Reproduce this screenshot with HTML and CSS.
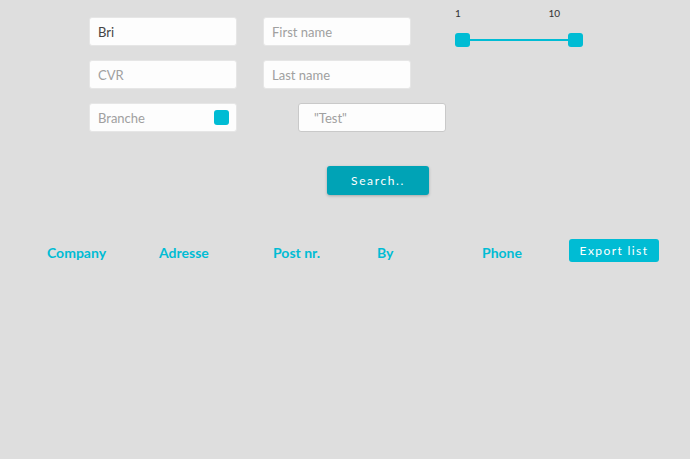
FILE: index.html
```html
<!DOCTYPE html>
<html>
<head>
<meta charset="utf-8">
<link rel="stylesheet" href="styles.css">
</head>
<body>
<div class="page">
  <div class="form-row">
    <div class="fields">
      <div class="input"><span class="value">Bri</span></div>
      <div class="input"><span class="ph">First name</span></div>
      <div class="input"><span class="ph">CVR</span></div>
      <div class="input"><span class="ph">Last name</span></div>
      <div class="input check-input"><span class="ph">Branche</span><span class="box"></span></div>
      <div class="input test-input"><span class="ph">"Test"</span></div>
    </div>
    <div class="slider">
      <div class="labels"><span>1</span><span>10</span></div>
      <div class="track">
        <span class="handle"></span>
        <span class="line"></span>
        <span class="handle"></span>
      </div>
    </div>
  </div>
  <div class="search-row">
    <button class="search">Search..</button>
  </div>
  <div class="header-row">
    <span class="col c1">Company</span>
    <span class="col c2">Adresse</span>
    <span class="col c3">Post nr.</span>
    <span class="col c4">By</span>
    <span class="col c5">Phone</span>
    <button class="export">Export list</button>
  </div>
</div>
</body>
</html>
```

FILE: styles.css
```css
* { box-sizing: border-box; }
html, body {
  margin: 0;
  padding: 0;
  background: #dedede;
  width: 690px;
  height: 459px;
  overflow: hidden;
  font-family: "Lato", "Noto Sans", sans-serif;
}
.page {
  display: flex;
  flex-direction: column;
}
.form-row {
  display: flex;
  align-items: flex-start;
  padding-left: 89px;
}
.fields {
  margin-top: 17px;
  display: grid;
  grid-template-columns: 148px 148px;
  column-gap: 26px;
  row-gap: 14px;
}
.input {
  height: 29px;
  background: #fdfdfd;
  border: 1px solid #e6e6e6;
  border-radius: 3px;
  display: flex;
  align-items: center;
  padding: 0 8px;
  font-size: 13px;
}
.value { color: #444; }
.ph { color: #a0a0a0; }
.check-input { justify-content: space-between; padding-right: 7px; }
.box {
  width: 15px;
  height: 15px;
  background: #00bcd4;
  border-radius: 3px;
}
.test-input {
  margin-left: 35px;
  width: 148px;
  border-color: #c9c9c9;
  padding-left: 15px;
}
.slider {
  margin-left: 44px;
  margin-top: 7px;
  width: 128px;
  display: flex;
  flex-direction: column;
}
.labels {
  display: flex;
  justify-content: space-between;
  font-size: 10px;
  color: #333;
  height: 12px;
  padding-right: 23px;
}
.track {
  margin-top: 14px;
  display: flex;
  align-items: center;
}
.handle {
  width: 15px;
  height: 14px;
  background: #00bcd4;
  border-radius: 3px;
  flex: none;
}
.line {
  flex: 1;
  height: 2px;
  background: #00bcd4;
}
.search-row {
  padding-left: 327px;
  margin-top: 34px;
}
.search {
  width: 102px;
  height: 29px;
  background: #00a3b6;
  color: #fff;
  border: none;
  border-radius: 3px;
  font-family: inherit;
  font-size: 12px;
  letter-spacing: 1.6px;
  box-shadow: 0 1px 3px rgba(0,0,0,0.25);
  padding: 0;
}
.header-row {
  display: flex;
  align-items: center;
  margin-top: 44px;
  padding-left: 47px;
  height: 23px;
}
.col {
  color: #00bcd4;
  font-size: 14px;
  font-weight: 700;
  margin-top: 4px;
}
.c1 { width: 112px; }
.c2 { width: 114px; }
.c3 { width: 104px; }
.c4 { width: 105px; }
.c5 { width: 87px; }
.export {
  width: 90px;
  height: 23px;
  background: #00bcd4;
  color: #fff;
  border: none;
  border-radius: 3px;
  font-family: inherit;
  font-size: 12px;
  letter-spacing: 1.4px;
  padding: 0;
}
```
